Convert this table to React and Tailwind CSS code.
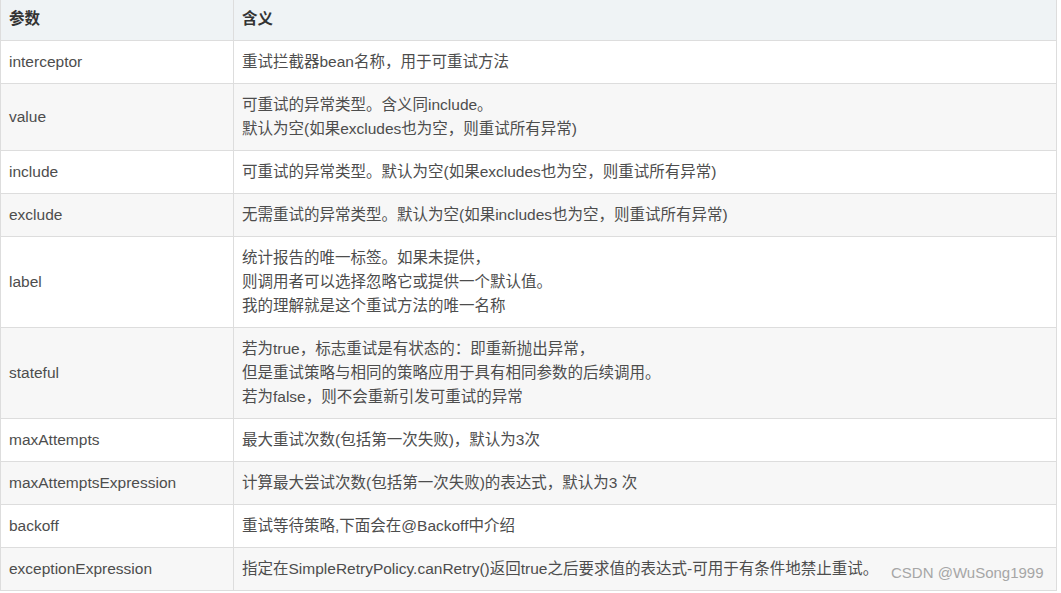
import React from "react";

const rows = [
  ["interceptor", ["重试拦截器bean名称，用于可重试方法"]],
  ["value", ["可重试的异常类型。含义同include。", "默认为空(如果excludes也为空，则重试所有异常)"]],
  ["include", ["可重试的异常类型。默认为空(如果excludes也为空，则重试所有异常)"]],
  ["exclude", ["无需重试的异常类型。默认为空(如果includes也为空，则重试所有异常)"]],
  ["label", ["统计报告的唯一标签。如果未提供，", "则调用者可以选择忽略它或提供一个默认值。", "我的理解就是这个重试方法的唯一名称"]],
  ["stateful", ["若为true，标志重试是有状态的：即重新抛出异常，", "但是重试策略与相同的策略应用于具有相同参数的后续调用。", "若为false，则不会重新引发可重试的异常"]],
  ["maxAttempts", ["最大重试次数(包括第一次失败)，默认为3次"]],
  ["maxAttemptsExpression", ["计算最大尝试次数(包括第一次失败)的表达式，默认为3 次"]],
  ["backoff", ["重试等待策略,下面会在@Backoff中介绍"]],
  ["exceptionExpression", ["指定在SimpleRetryPolicy.canRetry()返回true之后要求值的表达式-可用于有条件地禁止重试。"]],
];

const font = { fontFamily: '"Liberation Sans", "Noto Sans CJK SC", sans-serif' };

export default function App() {
  return (
    <div className="bg-white w-[1061px] h-[593px]" style={font}>
      <div className="relative w-[1057px] border-l border-r border-b border-[#dddddd] text-[15.5px] leading-[24px] text-[#4d4d4d]">
        <div className="flex bg-[#eff3f5] border-b border-[#dddddd] font-bold text-[#333333]">
          <div className="w-[233px] shrink-0 border-r border-[#dddddd] pl-[8px] pt-[7px] pb-[9px]">参数</div>
          <div className="flex-1 pl-[8px] pt-[7px] pb-[9px]">含义</div>
        </div>
        {rows.map(([name, lines], i) => (
          <div
            key={name}
            className={
              "flex border-[#dddddd] " +
              (i % 2 === 1 ? "bg-[#f7f7f7] " : "bg-white ") +
              (i < rows.length - 1 ? "border-b" : "")
            }
          >
            <div className="w-[233px] shrink-0 border-r border-[#dddddd] pl-[8px] py-[9px] flex items-center">
              {name}
            </div>
            <div className="flex-1 pl-[8px] py-[9px]">
              {lines.map((l, j) => (
                <div key={j}>{l}</div>
              ))}
            </div>
          </div>
        ))}
        <div className="absolute left-[890px] top-[563px] text-[15px] leading-[20px] text-[#a6a6a6] whitespace-nowrap">
          CSDN @WuSong1999
        </div>
      </div>
    </div>
  );
}
